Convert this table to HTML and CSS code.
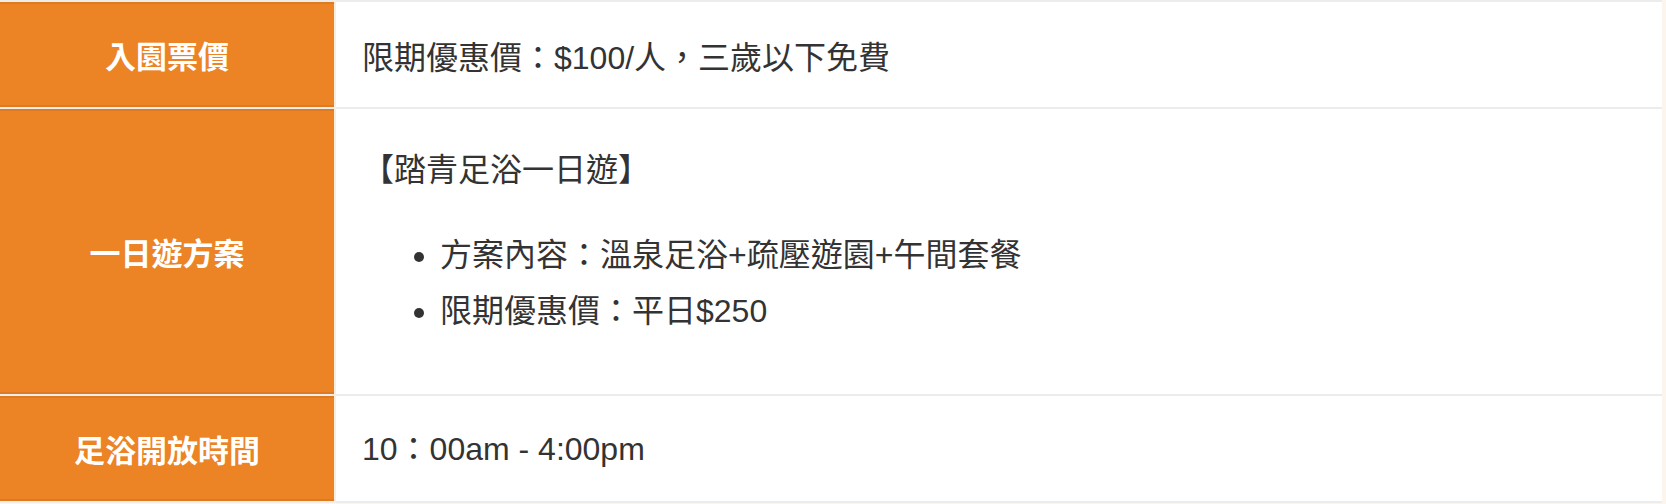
FILE: index.html
```html
<!DOCTYPE html>
<html lang="zh-Hant">
<head>
<meta charset="utf-8">
<title>足浴資訊</title>
<link rel="stylesheet" href="styles.css">
</head>
<body>
<table class="info-table">
  <tbody>
    <tr class="row row-short">
      <th class="label">入園票價</th>
      <td class="value value-first">限期優惠價：$100/人，三歲以下免費</td>
    </tr>
    <tr class="row row-plan">
      <th class="label">一日遊方案</th>
      <td class="value value-plan">
        <p class="plan-title">【踏青足浴一日遊】</p>
        <ul class="plan-list">
          <li>方案內容：溫泉足浴+疏壓遊園+午間套餐</li>
          <li>限期優惠價：平日$250</li>
        </ul>
      </td>
    </tr>
    <tr class="row row-short">
      <th class="label">足浴開放時間</th>
      <td class="value">10：00am - 4:00pm</td>
    </tr>
  </tbody>
</table>
</body>
</html>
```

FILE: styles.css
```css
html, body {
  margin: 0;
  padding: 0;
}

body {
  background: #fbf5ee;
  font-family: "Liberation Sans", "Noto Sans CJK TC", sans-serif;
  color: #333333;
}

.info-table {
  width: 1662px;
  border-collapse: collapse;
  background: #ffffff;
}

.row {
  border-top: 2px solid #ececec;
  border-bottom: 2px solid #ececec;
}

.row-short {
  height: 107px;
}

.row-plan {
  height: 287px;
}

.label {
  width: 334px;
  padding: 0;
  background: #ec8324;
  color: #ffffff;
  font-family: "Noto Sans CJK TC", sans-serif;
  font-weight: 700;
  font-size: 31px;
  text-align: center;
  vertical-align: middle;
  border-right: 2px solid #fbeee0;
  box-shadow: inset 0 2px 0 rgba(0, 0, 0, 0.06), inset 0 -2px 0 rgba(0, 0, 0, 0.06);
}

.value {
  padding: 0 26px;
  font-size: 32px;
  line-height: 56px;
  vertical-align: middle;
}

.value-first {
  padding-top: 6px;
}

.value-plan {
  vertical-align: top;
  padding-top: 33px;
}

.plan-title {
  margin: 0 0 29px;
}

.plan-list {
  margin: 0;
  padding-left: 78px;
}
```
